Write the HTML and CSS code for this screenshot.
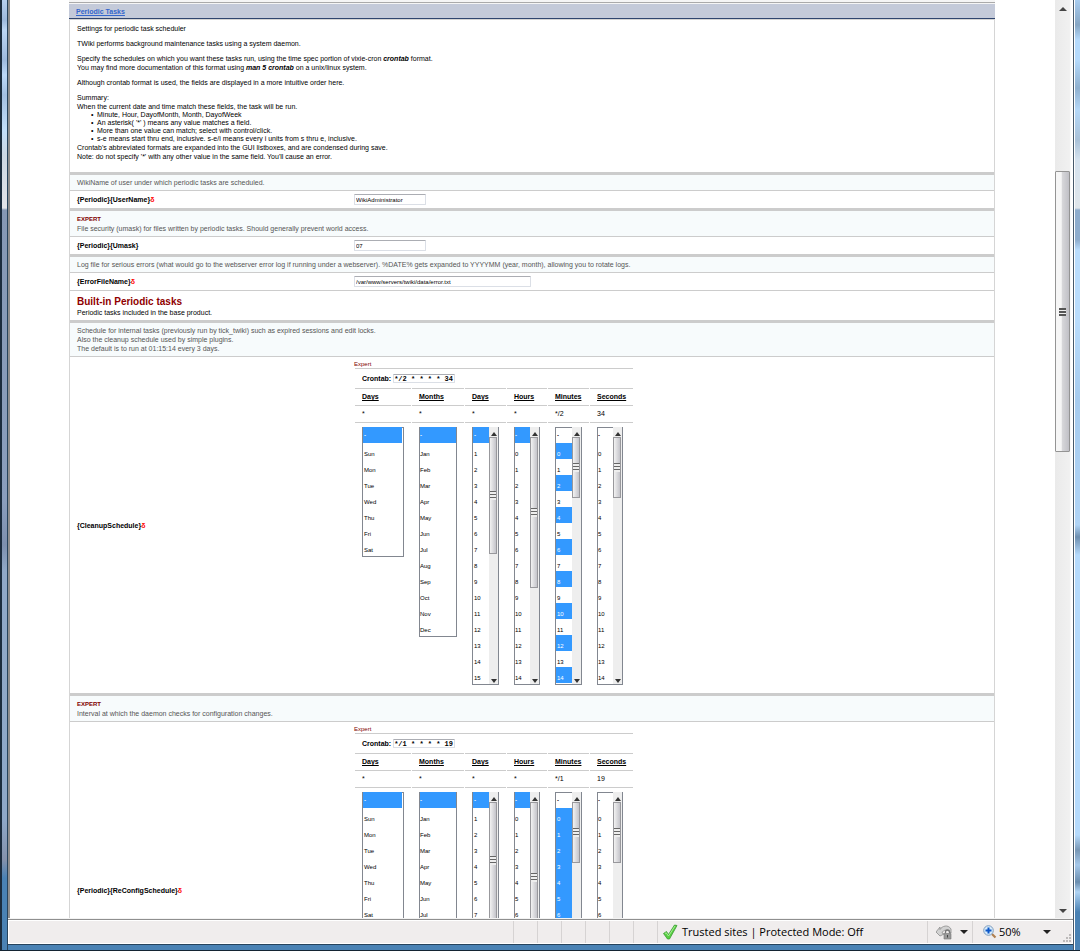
FILE: index.html
```html
<!DOCTYPE html>
<html lang="en">
<head>
<meta charset="utf-8">
<title>Periodic Tasks</title>
<link rel="stylesheet" href="styles.css">
</head>
<body>
<div class="window">
  <div class="frame frame-left"></div>
  <div class="inner">
    <div class="viewport">
      <main class="page">
        <div class="page-top"></div>
        <h1 class="section-title"><a href="#periodic">Periodic Tasks</a></h1>
        <form class="settings" id="periodic">
          <section class="intro">
            <p>Settings for periodic task scheduler</p>
            <p>TWiki performs background maintenance tasks using a system daemon.</p>
            <p>Specify the schedules on which you want these tasks run, using the time spec portion of vixie-cron <b><i>crontab</i></b> format.<br>You may find more documentation of this format using <b><i>man 5 crontab</i></b> on a unix/linux system.</p>
            <p>Although crontab format is used, the fields are displayed in a more intuitive order here.</p>
            <div>Summary:<br>When the current date and time match these fields, the task will be run.</div>
            <ul>
              <li>Minute, Hour, DayofMonth, Month, DayofWeek</li>
              <li>An asterisk( '*' ) means any value matches a field.</li>
              <li>More than one value can match; select with control/click.</li>
              <li>s-e means start thru end, inclusive. s-e/i means every i units from s thru e, inclusive.</li>
            </ul>
            <div>Crontab's abbreviated formats are expanded into the GUI listboxes, and are condensed during save.<br>Note: do not specify '*' with any other value in the same field. You'll cause an error.</div>
          </section>

          <div class="info">WikiName of user under which periodic tasks are scheduled.</div>
          <div class="row"><label class="key" for="user">{Periodic}{UserName}<span class="delta">δ</span></label><input class="text" id="user" value="WikiAdministrator"></div>

          <div class="info"><b class="expert">EXPERT</b>File security (umask) for files written by periodic tasks. Should generally prevent world access.</div>
          <div class="row"><label class="key" for="umask">{Periodic}{Umask}</label><input class="text" id="umask" value="07"></div>

          <div class="info">Log file for serious errors (what would go to the webserver error log if running under a webserver). %DATE% gets expanded to YYYYMM (year, month), allowing you to rotate logs.</div>
          <div class="row"><label class="key" for="errfile">{ErrorFileName}<span class="delta">δ</span></label><input class="text wide" id="errfile" value="/var/www/servers/twiki/data/error.txt"></div>

          <div class="group"><h2>Built-in Periodic tasks</h2><p>Periodic tasks included in the base product.</p></div>

          <div class="info">Schedule for internal tasks (previously run by tick_twiki) such as expired sessions and edit locks.<br>Also the cleanup schedule used by simple plugins.<br>The default is to run at 01:15:14 every 3 days.</div>
          <div class="row schedule">
            <div class="key">{CleanupSchedule}<span class="delta">δ</span></div>
            <div class="cron">
              <div class="cron-note">Expert</div>
              <table>
                <tr><td colspan="6" class="spec"><label for="cron1">Crontab:</label><input class="mono" id="cron1" value="*/2 * * * * 34"></td></tr>
                <tr><th>Days</th><th>Months</th><th>Days</th><th>Hours</th><th>Minutes</th><th>Seconds</th></tr>
                <tr class="values"><td>*</td><td>*</td><td>*</td><td>*</td><td>*/2</td><td>34</td></tr>
                <tr class="lists">
                  <td><div class="list w-week"><select multiple size="8" aria-label="Days of week"><option selected>-<option>Sun<option>Mon<option>Tue<option>Wed<option>Thu<option>Fri<option>Sat</select></div></td>
                  <td><div class="list w-month"><select multiple size="13" aria-label="Months"><option selected>-<option>Jan<option>Feb<option>Mar<option>Apr<option>May<option>Jun<option>Jul<option>Aug<option>Sep<option>Oct<option>Nov<option>Dec</select></div></td>
                  <td><div class="list w-num"><select multiple size="16" aria-label="Days of month"><option selected>-<option>1<option>2<option>3<option>4<option>5<option>6<option>7<option>8<option>9<option>10<option>11<option>12<option>13<option>14<option>15</select><div class="bar"><i class="up"></i><i class="thumb t-days"></i><i class="down"></i></div></div></td>
                  <td><div class="list w-hour"><select multiple size="16" aria-label="Hours"><option selected>-<option>0<option>1<option>2<option>3<option>4<option>5<option>6<option>7<option>8<option>9<option>10<option>11<option>12<option>13<option>14</select><div class="bar"><i class="up"></i><i class="thumb t-hours"></i><i class="down"></i></div></div></td>
                  <td><div class="list w-num"><select multiple size="16" aria-label="Minutes"><option>-<option selected>0<option>1<option selected>2<option>3<option selected>4<option>5<option selected>6<option>7<option selected>8<option>9<option selected>10<option>11<option selected>12<option>13<option selected>14</select><div class="bar"><i class="up"></i><i class="thumb t-mins"></i><i class="down"></i></div></div></td>
                  <td><div class="list w-hour"><select multiple size="16" aria-label="Seconds"><option>-<option>0<option>1<option>2<option>3<option>4<option>5<option>6<option>7<option>8<option>9<option>10<option>11<option>12<option>13<option>14</select><div class="bar"><i class="up"></i><i class="thumb t-mins"></i><i class="down"></i></div></div></td>
                </tr>
              </table>
            </div>
          </div>

          <div class="info"><b class="expert">EXPERT</b>Interval at which the daemon checks for configuration changes.</div>
          <div class="row schedule">
            <div class="key">{Periodic}{ReConfigSchedule}<span class="delta">δ</span></div>
            <div class="cron">
              <div class="cron-note">Expert</div>
              <table>
                <tr><td colspan="6" class="spec"><label for="cron2">Crontab:</label><input class="mono" id="cron2" value="*/1 * * * * 19"></td></tr>
                <tr><th>Days</th><th>Months</th><th>Days</th><th>Hours</th><th>Minutes</th><th>Seconds</th></tr>
                <tr class="values"><td>*</td><td>*</td><td>*</td><td>*</td><td>*/1</td><td>19</td></tr>
                <tr class="lists">
                  <td><div class="list w-week"><select multiple size="8" aria-label="Days of week"><option selected>-<option>Sun<option>Mon<option>Tue<option>Wed<option>Thu<option>Fri<option>Sat</select></div></td>
                  <td><div class="list w-month"><select multiple size="13" aria-label="Months"><option selected>-<option>Jan<option>Feb<option>Mar<option>Apr<option>May<option>Jun<option>Jul<option>Aug<option>Sep<option>Oct<option>Nov<option>Dec</select></div></td>
                  <td><div class="list w-num"><select multiple size="16" aria-label="Days of month"><option selected>-<option>1<option>2<option>3<option>4<option>5<option>6<option>7<option>8<option>9<option>10<option>11<option>12<option>13<option>14<option>15</select><div class="bar"><i class="up"></i><i class="thumb t-days"></i><i class="down"></i></div></div></td>
                  <td><div class="list w-hour"><select multiple size="16" aria-label="Hours"><option selected>-<option>0<option>1<option>2<option>3<option>4<option>5<option>6<option>7<option>8<option>9<option>10<option>11<option>12<option>13<option>14</select><div class="bar"><i class="up"></i><i class="thumb t-hours"></i><i class="down"></i></div></div></td>
                  <td><div class="list w-num"><select multiple size="16" aria-label="Minutes"><option>-<option selected>0<option selected>1<option selected>2<option selected>3<option selected>4<option selected>5<option selected>6<option selected>7<option selected>8<option selected>9<option selected>10<option selected>11<option selected>12<option selected>13<option selected>14</select><div class="bar"><i class="up"></i><i class="thumb t-mins"></i><i class="down"></i></div></div></td>
                  <td><div class="list w-hour"><select multiple size="16" aria-label="Seconds"><option>-<option>0<option>1<option>2<option>3<option>4<option>5<option>6<option>7<option>8<option>9<option>10<option>11<option>12<option>13<option>14</select><div class="bar"><i class="up"></i><i class="thumb t-mins"></i><i class="down"></i></div></div></td>
                </tr>
              </table>
            </div>
          </div>
        </form>
      </main>
      <div class="scroll"><i class="arrow-up"></i><i class="scroll-thumb"></i><i class="arrow-down"></i></div>
    </div>
    <footer class="status">
      <div class="grow"></div>
      <div class="slot"></div><div class="slot"></div><div class="slot"></div><div class="slot"></div><div class="slot"></div><div class="slot"></div>
      <div class="zone">
        <svg width="16" height="16" viewBox="0 0 16 16"><path d="M1.500 9.500l3-2 2 3L12.500 1l2.500.5L7.500 15h-2z" fill="#57cf43" stroke="#3b9a32" stroke-width=".8"/><path d="M3 9.500l1.200-.7L6.500 12 13 2" fill="none" stroke="#a5ee92"/></svg>
        <span>Trusted sites | Protected Mode: Off</span>
      </div>
      <button class="privacy" type="button" aria-label="Security report">
        <svg width="16" height="16" viewBox="0 0 16 16"><path d="M0 8l4-5v2.500C6 2 12 0 15 5v4C12 5 7 5.500 6 9l2 1-4 2z" fill="#d2d2d2" stroke="#8b8b8b" stroke-width=".8"/><path d="M9.500 9.500V8a2 2 0 0 1 4 0v1.500" fill="none" stroke="#777" stroke-width="1.300"/><path d="M8 9.500h7V15H8z" fill="#999" stroke="#777" stroke-width=".6"/><path d="M11.500 11v2.500" stroke="#444"/></svg>
        <i class="caret"></i>
      </button>
      <button class="zoom" type="button">
        <svg width="14" height="14" viewBox="0 0 14 14"><path d="M9 9l3.500 3.500" stroke="#b08050" stroke-width="2.200"/><circle cx="5.500" cy="5.500" r="4.800" fill="#d7ebfb" stroke="#7f9cbc"/><path d="M5.500 2.500v6M2.500 5.500h6" stroke="#0b56c8" stroke-width="2"/></svg>
        <span>50%</span><i class="caret"></i>
      </button>
      <svg class="grip" width="10" height="10" viewBox="0 0 10 10"><path d="M7 1h2v2H7zM4 4h2v2H4zM7 4h2v2H7zM1 7h2v2H1zM4 7h2v2H4zM7 7h2v2H7z" fill="#bdbaba"/></svg>
    </footer>
  </div>
  <div class="frame frame-right"></div>
</div>
</body>
</html>
```
FILE: styles.css
```css
* { box-sizing: border-box; }
body { margin: 0; font: 7px/9px "Liberation Sans", Arial, sans-serif; color: #000; }
.window {
  display: flex; height: 100vh; overflow: hidden;
  background: #4a82b4; border-bottom: 1px solid #142433;
}
.frame { flex: none; }
.frame-left {
  width: 8px; border-left: 2px solid #1b2c3d; border-right: 1px solid #26435c;
  background: linear-gradient(#b5cfee 0, #9db9dc 20px, #bcd6f4 30px, #9db9dc 60px, #bcd9f8 75px, #a3bfe0 95px, #c2def9 130px, #cbd7e4 155px, #e2e4e8 208px, #8598b4 210px, #8a9ebd 500px, #7d90ae 545px, #8fa8c7 570px, #8ea8c8 820px, #8492ab 860px, #4a82b4 878px);
}
.frame-right {
  width: 7px; border-left: 1px solid #46586a;
  background: linear-gradient(90deg, #fff 1px, transparent 1px), linear-gradient(#a9cdf0 0, #86a6c4 25px, #b5dafc 40px, #b5dafc 60px, #8fb0cf 88px, #b5d8f8 110px, #a9c1d8 140px, #d5e2ee 160px, #dfe5ea 208px, #8fadcd 210px, #8fadcd 240px, #b9dcfc 250px, #b9dcfc 320px, #a6cbee 400px, #b0d4f6 525px, #6e8fb0 537px, #b5dafc 555px, #b5dafc 835px, #7897b5 850px, #a5c8ea 865px, #6a8dae 882px, #b0d4f4 892px, #4a82b4 912px);
}
.inner { flex: 1; min-width: 0; display: flex; flex-direction: column; border-bottom: 1px solid #26435c; margin-bottom: 5px; background: #f3f3f3; }
.viewport { flex: 1; min-height: 0; display: flex; overflow: hidden; border-left: 2px solid #8e8e8e; background: #fff; }
.page { flex: 1; min-width: 0; padding: 0 60px 0 59px; overflow: hidden; }
.page-top { height: 4px; background: #f5f5f5; border-bottom: 1px solid #f5f5f5; box-shadow: inset 0 -1px #aaa; }
.section-title {
  margin: 0; height: 15px; padding: 0 7px; background: #c4cad9; border-bottom: 1px solid #2f456e;
  font-size: 7px; line-height: 15px;
}
.section-title a { color: #3366cc; }
.settings { border: 1px solid #d5d5d5; border-bottom: 0; }
.intro { padding: 4px 7px 11px; }
.intro p { margin: 0 0 6px; }
.intro ul { list-style: none; margin: 0; padding: 0 0 0 14px; line-height: 8px; }
.intro li::before { content: "•"; display: inline-block; width: 6px; }

.info { border-top: 3px solid #ccc; background: #f7fbfc; padding: 3px 7px; color: #555; }
.expert { display: block; color: #800000; font-size: 6px; line-height: 10px; }
.row { display: flex; align-items: center; border-top: 1px solid #ccc; padding: 3px 7px; }
.key { width: 277px; flex: none; font-weight: bold; }
.delta { color: #f00; }
.text {
  width: 72px; height: 11px; padding: 1px 1px 0; font: 6px/8px "Liberation Sans", Arial, sans-serif; color: #000;
  border: 1px solid #dbdfe6; border-top-color: #abadb3; border-radius: 1px;
}
.wide { width: 177px; }
.group { border-top: 1px solid #ccc; padding: 5px 7px 3px; }
.group h2 { margin: 0; color: #900000; font-size: 10px; line-height: 12px; }
.group p { margin: 0; }

.schedule { padding: 0 7px; }
.cron { padding: 3px 0 8px; }
.cron-note { color: #800000; font-size: 6px; line-height: 8px; }
.cron table { border-spacing: 1px 0; }
.cron td, .cron th { border-top: 1px solid #ccc; padding: 0 7px; text-align: left; height: 17px; font-size: 7px; line-height: 8px; }
.cron th { text-decoration: underline; }
.cron .spec { height: 20px; font-weight: bold; }
.mono {
  width: 62px; height: 9px; margin-left: 2px; padding: 0; font: bold 7px/7px "Liberation Mono", monospace; color: #000;
  border: 1px solid #dbdfe6; border-top-color: #abadb3; border-radius: 1px;
}
.cron .lists td { vertical-align: top; padding: 4px 7px 0; }
.list {
  display: flex; border: 1px solid #828790; border-top: 0;
  background: linear-gradient(#828790, #828790) top / 100% 1px no-repeat;
}
.w-week { width: 42px; padding-right: 1px; }
.w-month { width: 38px; }
.w-num { width: 27px; }
.w-hour { width: 26px; }
.list select {
  appearance: none; flex: 1; min-width: 0; margin: 0; padding: 0 0 1px; border: 0; border-radius: 0; outline: 0;
  background: none; overflow: hidden; font: 6px/8px "Liberation Sans", Arial, sans-serif; color: #000;
}
.list option { display: block; height: 16px; min-height: 16px; padding: 8px 1px 0; line-height: 8px; }
.list option:first-child { padding: 5px 1px 3px; font-weight: bold; }
.w-month option, .w-month option:first-child, .w-hour option, .w-hour option:first-child { padding-left: 0; }
.list option:checked { background: linear-gradient(#39f, #39f); color: #fff; -webkit-text-fill-color: #fff; }
.bar { width: 9px; display: flex; flex-direction: column; align-items: flex-start; background: #eee; padding: 5px 0 1px; }
.up { border: 3px solid transparent; border-top: 0; border-bottom: 4px solid #333; align-self: center; }
.down { border: 3px solid transparent; border-bottom: 0; border-top: 4px solid #333; margin-top: auto; align-self: center; }
.thumb {
  width: 8px; margin-top: 1px; border: 1px solid #98989c;
  background: repeating-linear-gradient(#666 0 1px, #eee 1px 3px) center / 6px 9px no-repeat, linear-gradient(90deg, #f2f2f2, #c4c4ca);
}
.t-days { height: 117px; }
.t-hours { height: 151px; }
.t-mins { height: 61px; }

.scroll { width: 18px; flex: none; display: flex; flex-direction: column; background: linear-gradient(90deg, #eaeaea, #f1f1f1 15px, #fff 16px); padding: 7px 3px 5px 0; }
.arrow-up { align-self: center; border: 4px solid transparent; border-top: 0; border-bottom: 4px solid #444; }
.arrow-down { align-self: center; border: 4px solid transparent; border-bottom: 0; border-top: 4px solid #444; margin-top: auto; }
.scroll-thumb {
  height: 281px; margin-top: 160px; border: 1px solid #949494; border-radius: 1px;
  background: repeating-linear-gradient(#555 0 2px, #eee 2px 3px) center / 7px 8px no-repeat, linear-gradient(90deg, #f6f6f6 0 40%, #d6d6d9 50%, #c0c0c6);
}

.status {
  flex: none; height: 24px; display: flex; align-items: stretch; background: #f0eded;
  border: 1px solid #fff; box-shadow: 0 -1px #8f8f8f; margin-top: 2px;
  font: 11px/22px "Open Sans", "Noto Sans", sans-serif;
}
.grow { flex: 1; }
.slot { width: 24px; border-left: 1px solid #d6d3d3; }
.zone { width: 270px; display: flex; align-items: center; gap: 4px; padding-left: 4px; border-left: 1px solid #d6d3d3; white-space: nowrap; }
.status button { display: flex; align-items: center; border: 0; border-left: 1px solid #d6d3d3; background: none; font: inherit; color: #000; margin: 0; }
.status .privacy { width: 45px; padding: 0 4px 0 8px; justify-content: space-between; }
.status .zoom { width: 88px; padding: 0 9px 0 10px; gap: 2px; }
.zoom .caret { margin-left: auto; }
.caret { border: 4px solid transparent; border-bottom: 0; border-top: 4px solid #222; }
.grip { align-self: flex-end; margin-left: 2px; }
```
